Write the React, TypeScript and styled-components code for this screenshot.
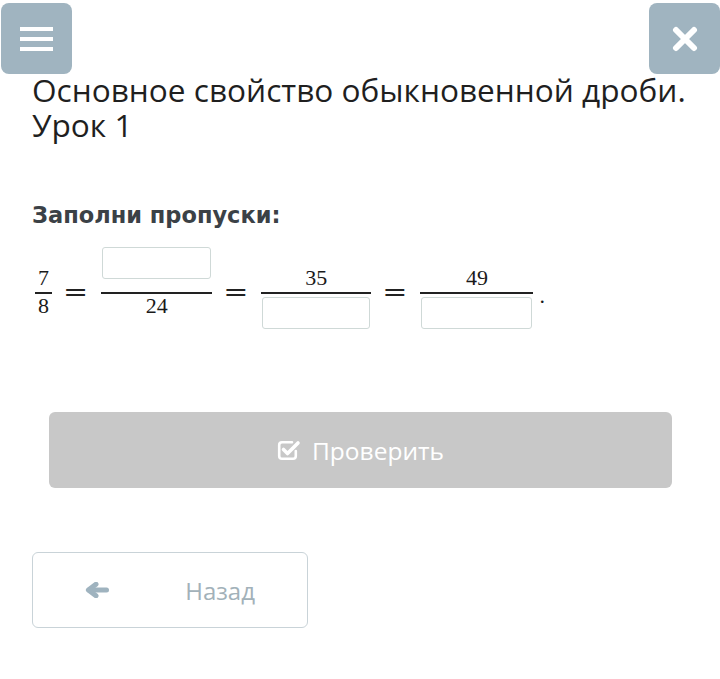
import React from "react";
import styled, { createGlobalStyle } from "styled-components";

const Global = createGlobalStyle`
  html, body { margin: 0; padding: 0; background: #ffffff; }
  body { font-family: "Open Sans", "Noto Sans", sans-serif; }
  * { box-sizing: border-box; }
`;

const Page = styled.div`
  width: 720px;
  min-height: 679px;
  display: flex;
  flex-direction: column;
`;

const Header = styled.div`
  display: flex;
  justify-content: space-between;
  padding-top: 3px;
  height: 74px;
`;

const IconButton = styled.button<{ $side: "left" | "right" }>`
  width: 71px;
  height: 71px;
  border: none;
  padding: 0;
  background: #a0b4c0;
  border-radius: 8px;
  display: flex;
  align-items: center;
  justify-content: center;
  color: #ffffff;
  margin: ${(p) => (p.$side === "left" ? "0 0 0 1px" : "0 0 0 0")};
`;

const Burger = styled.span`
  display: flex;
  flex-direction: column;
  gap: 6px;
`;

const BurgerLine = styled.span`
  width: 33px;
  height: 4px;
  background: #ffffff;
  display: block;
`;

const Title = styled.h1`
  margin: -2px 0 0 32px;
  font-family: "Open Sans", sans-serif;
  font-weight: 400;
  font-size: 31.6px;
  line-height: 35px;
  color: #1f1f1f;
`;

const Prompt = styled.h2`
  margin: 59px 0 0 32px;
  font-family: "DejaVu Sans", sans-serif;
  font-weight: 700;
  font-size: 22.5px;
  line-height: 28px;
  color: #3b4146;
`;

const MathRow = styled.div`
  display: flex;
  align-items: center;
  margin: 18px 0 0 35px;
  color: #1a1a1a;
`;

const Fraction = styled.div`
  display: grid;
  grid-template-rows: 45px 2px 42px;
  justify-items: center;
`;

const Num = styled.div`
  display: flex;
  align-items: flex-end;
  justify-content: center;
  padding: 0 1px;
`;

const Den = styled.div`
  display: flex;
  align-items: flex-start;
  justify-content: center;
  padding: 0 1px;
`;

const Bar = styled.div`
  width: 100%;
  height: 2px;
  background: #222;
`;

const Digit = styled.span<{ $pos: "num" | "den" }>`
  font-family: "Liberation Serif", serif;
  font-size: 22px;
  line-height: 22px;
  margin-bottom: ${(p) => (p.$pos === "num" ? "3px" : "0")};
  margin-top: ${(p) => (p.$pos === "den" ? "1px" : "0")};
  padding: 0 2px;
`;

const Blank = styled.input<{ $pos: "num" | "den"; $w?: number }>`
  width: ${(p) => p.$w ?? 109}px;
  height: 32px;
  border: 1px solid #cfd9d7;
  border-radius: 3px;
  background: #fff;
  margin-bottom: ${(p) => (p.$pos === "num" ? "13px" : "0")};
  margin-top: ${(p) => (p.$pos === "den" ? "3px" : "0")};
  outline: none;
`;

const Equals = styled.span`
  font-family: "DejaVu Sans", sans-serif;
  font-size: 30px;
  line-height: 30px;
  margin: 0 13px 0 11px;
  color: #222;
  transform: scaleY(0.75);
`;

const Period = styled.span`
  font-family: "Liberation Serif", serif;
  font-size: 22px;
  align-self: center;
  margin: 8px 0 0 6px;
`;

const CheckButton = styled.button`
  margin: 76px 48px 0 49px;
  height: 76px;
  border: none;
  border-radius: 6px;
  background: #c8c8c8;
  color: #ffffff;
  display: flex;
  align-items: center;
  justify-content: center;
  gap: 11px;
  font-family: "Open Sans", sans-serif;
  font-size: 24.5px;
`;

const BackButton = styled.button`
  margin: 64px 0 0 32px;
  width: 276px;
  height: 76px;
  border: 1px solid #c9d3d8;
  border-radius: 6px;
  background: #ffffff;
  display: flex;
  align-items: center;
  justify-content: space-between;
  padding: 0 52px 0 52px;
  font-family: "Open Sans", sans-serif;
  font-size: 24px;
  color: #a2b1b9;
`;

const CloseIcon = () => (
  <svg width="26" height="26" viewBox="0 0 26 26">
    <path d="M4 4 L22 22 M22 4 L4 22" stroke="#fff" strokeWidth="6" strokeLinecap="round" />
  </svg>
);

const CheckSquareIcon = () => (
  <svg width="24" height="22" viewBox="0 0 24 22" fill="none">
    <path
      d="M15 3.2 H5 Q2.2 3.2 2.2 6 V17 Q2.2 19.8 5 19.8 H16 Q18.8 19.8 18.8 17 V12"
      stroke="#fff"
      strokeWidth="2.6"
      strokeLinecap="round"
    />
    <path
      d="M6.5 10.5 L10.5 14.5 L21 4"
      stroke="#fff"
      strokeWidth="3.6"
      strokeLinecap="round"
      strokeLinejoin="round"
    />
  </svg>
);

const ArrowLeftIcon = () => (
  <svg width="24" height="16" viewBox="0 0 24 16" fill="none">
    <path d="M4 8 H21.5" stroke="#9fb3bf" strokeWidth="5" strokeLinecap="round" />
    <path
      d="M11 2.2 L3.4 8 L11 13.8"
      stroke="#9fb3bf"
      strokeWidth="5"
      strokeLinecap="round"
      strokeLinejoin="round"
    />
  </svg>
);

export default function App() {
  return (
    <Page>
      <Global />
      <Header>
        <IconButton $side="left" aria-label="menu">
          <Burger>
            <BurgerLine />
            <BurgerLine />
            <BurgerLine />
          </Burger>
        </IconButton>
        <IconButton $side="right" aria-label="close">
          <CloseIcon />
        </IconButton>
      </Header>
      <Title>
        Основное свойство обыкновенной дроби.
        <br />
        Урок 1
      </Title>
      <Prompt>Заполни пропуски:</Prompt>
      <MathRow>
        <Fraction>
          <Num><Digit $pos="num">7</Digit></Num>
          <Bar />
          <Den><Digit $pos="den">8</Digit></Den>
        </Fraction>
        <Equals>=</Equals>
        <Fraction>
          <Num><Blank $pos="num" /></Num>
          <Bar />
          <Den><Digit $pos="den">24</Digit></Den>
        </Fraction>
        <Equals>=</Equals>
        <Fraction>
          <Num><Digit $pos="num">35</Digit></Num>
          <Bar />
          <Den><Blank $pos="den" $w={108} /></Den>
        </Fraction>
        <Equals>=</Equals>
        <Fraction>
          <Num><Digit $pos="num">49</Digit></Num>
          <Bar />
          <Den><Blank $pos="den" $w={111} /></Den>
        </Fraction>
        <Period>.</Period>
      </MathRow>
      <CheckButton>
        <CheckSquareIcon />
        Проверить
      </CheckButton>
      <BackButton>
        <ArrowLeftIcon />
        Назад
      </BackButton>
    </Page>
  );
}
